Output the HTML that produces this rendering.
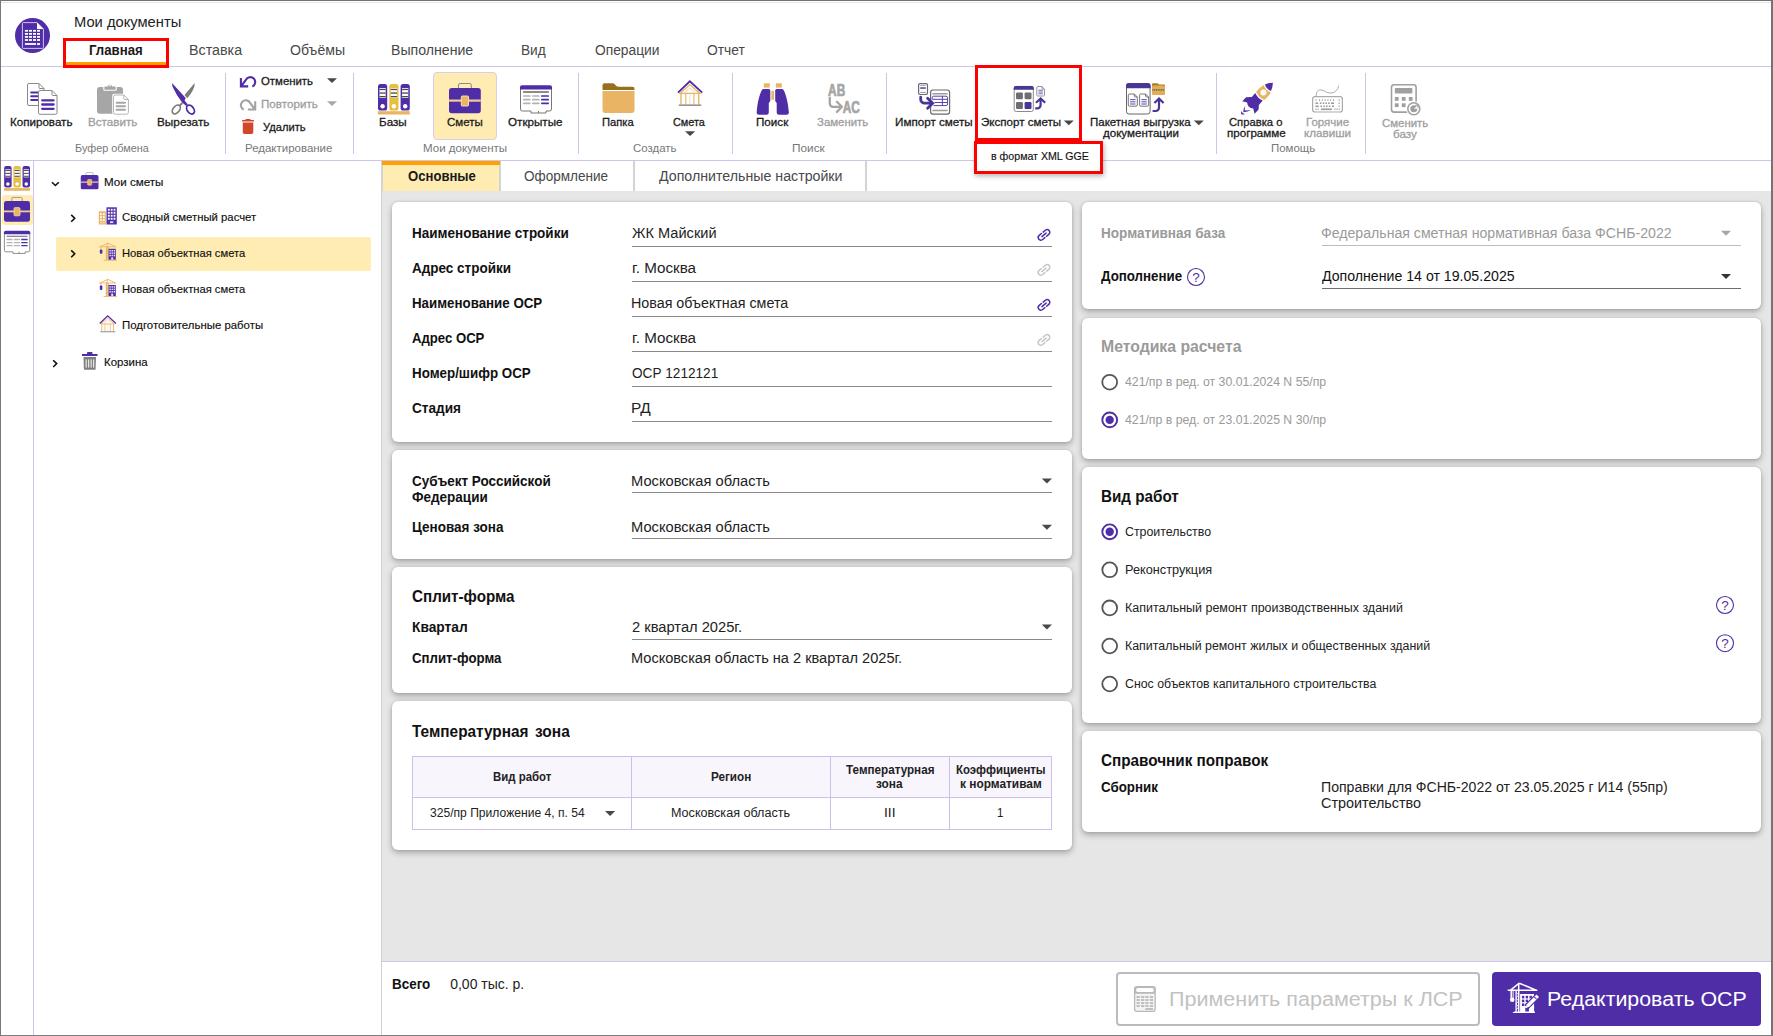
<!DOCTYPE html>
<html lang="ru"><head><meta charset="utf-8"><title>Мои документы</title>
<style>html,body{margin:0;padding:0;background:#fff}
body{width:1773px;height:1036px;position:relative;overflow:hidden;font-family:"Liberation Sans",sans-serif}
#r>div{position:absolute}
#t>span{position:absolute;white-space:nowrap;line-height:1;transform-origin:0 0}
svg{position:absolute;left:0;top:0}</style></head><body>
<div id="r">
<div style="left:382px;top:191px;width:1389px;height:770px;background:#e6e6e6"></div>
<div style="left:1px;top:66px;width:1770px;height:1px;background:#cfc4ea"></div>
<div style="left:1px;top:160px;width:1770px;height:1px;background:#cfc4ea"></div>
<div style="left:225px;top:72.5px;width:1px;height:81px;background:#cfc4ea"></div>
<div style="left:353px;top:72.5px;width:1px;height:81px;background:#cfc4ea"></div>
<div style="left:578px;top:72.5px;width:1px;height:81px;background:#cfc4ea"></div>
<div style="left:732px;top:72.5px;width:1px;height:81px;background:#cfc4ea"></div>
<div style="left:886px;top:72.5px;width:1px;height:81px;background:#cfc4ea"></div>
<div style="left:1216px;top:72.5px;width:1px;height:81px;background:#cfc4ea"></div>
<div style="left:1365px;top:72.5px;width:1px;height:81px;background:#cfc4ea"></div>
<div style="left:65px;top:62px;width:101px;height:4px;background:#ff9f00"></div>
<div style="left:432.5px;top:71.5px;width:64px;height:68px;background:#ffecb3;border:1px solid #d9cdee;border-radius:4px;box-sizing:border-box"></div>
<div style="left:33px;top:161px;width:1px;height:875px;background:#cfc4ea"></div>
<div style="left:2px;top:195px;width:31px;height:30px;background:#ffecb3;border-radius:3px"></div>
<div style="left:56px;top:237px;width:315px;height:34px;background:#ffecb3;border-radius:2px"></div>
<div style="left:381px;top:161px;width:2px;height:30px;background:#d3d3d3"></div>
<div style="left:383px;top:161px;width:116px;height:30px;background:#ffecb3"></div>
<div style="left:381.7px;top:161px;width:118.3px;height:4px;background:#ff9f00"></div>
<div style="left:499px;top:165px;width:2px;height:26px;background:#d3d3d3"></div>
<div style="left:500px;top:161px;width:1px;height:4px;background:#d3d3d3"></div>
<div style="left:633px;top:161px;width:2px;height:30px;background:#d3d3d3"></div>
<div style="left:864.5px;top:161px;width:2px;height:30px;background:#d3d3d3"></div>
<div style="left:392px;top:202px;width:680px;height:240px;background:#fff;border-radius:6px;box-shadow:0 3px 6px rgba(0,0,0,.27),0 0 3px rgba(0,0,0,.13)"></div>
<div style="left:392px;top:450px;width:680px;height:108.5px;background:#fff;border-radius:6px;box-shadow:0 3px 6px rgba(0,0,0,.27),0 0 3px rgba(0,0,0,.13)"></div>
<div style="left:392px;top:567px;width:680px;height:126px;background:#fff;border-radius:6px;box-shadow:0 3px 6px rgba(0,0,0,.27),0 0 3px rgba(0,0,0,.13)"></div>
<div style="left:392px;top:701px;width:680px;height:148.5px;background:#fff;border-radius:6px;box-shadow:0 3px 6px rgba(0,0,0,.27),0 0 3px rgba(0,0,0,.13)"></div>
<div style="left:1082px;top:202px;width:679px;height:106.5px;background:#fff;border-radius:6px;box-shadow:0 3px 6px rgba(0,0,0,.27),0 0 3px rgba(0,0,0,.13)"></div>
<div style="left:1082px;top:317.5px;width:679px;height:141px;background:#fff;border-radius:6px;box-shadow:0 3px 6px rgba(0,0,0,.27),0 0 3px rgba(0,0,0,.13)"></div>
<div style="left:1082px;top:467px;width:679px;height:255.5px;background:#fff;border-radius:6px;box-shadow:0 3px 6px rgba(0,0,0,.27),0 0 3px rgba(0,0,0,.13)"></div>
<div style="left:1082px;top:731px;width:679px;height:101px;background:#fff;border-radius:6px;box-shadow:0 3px 6px rgba(0,0,0,.27),0 0 3px rgba(0,0,0,.13)"></div>
<div style="left:632px;top:246px;width:420px;height:1px;background:#8a8a8a"></div>
<div style="left:632px;top:281px;width:420px;height:1px;background:#8a8a8a"></div>
<div style="left:632px;top:316px;width:420px;height:1px;background:#8a8a8a"></div>
<div style="left:632px;top:351px;width:420px;height:1px;background:#8a8a8a"></div>
<div style="left:632px;top:386px;width:420px;height:1px;background:#8a8a8a"></div>
<div style="left:632px;top:421px;width:420px;height:1px;background:#8a8a8a"></div>
<div style="left:632px;top:492px;width:420px;height:1px;background:#8a8a8a"></div>
<div style="left:632px;top:538px;width:420px;height:1px;background:#8a8a8a"></div>
<div style="left:632px;top:639px;width:420px;height:1px;background:#8a8a8a"></div>
<div style="left:1322px;top:245px;width:419px;height:1px;background:#bdbdbd"></div>
<div style="left:1322px;top:287.5px;width:419px;height:1px;background:#6e6e6e"></div>
<div style="left:412px;top:756px;width:640px;height:74px;border:1px solid #cdbfe9;box-sizing:border-box;background:#fff"></div>
<div style="left:413px;top:757px;width:638px;height:40px;background:#f8f5fd"></div>
<div style="left:412px;top:797px;width:640px;height:1px;background:#cdbfe9"></div>
<div style="left:631px;top:756px;width:1px;height:74px;background:#cdbfe9"></div>
<div style="left:830px;top:756px;width:1px;height:74px;background:#cdbfe9"></div>
<div style="left:949px;top:756px;width:1px;height:74px;background:#cdbfe9"></div>
<div style="left:382px;top:961px;width:1389px;height:1px;background:#cfc4ea"></div>
<div style="left:382px;top:962px;width:1389px;height:74px;background:#fff"></div>
<div style="left:1116px;top:972px;width:363.5px;height:54px;border:2px solid #bcbcbc;border-radius:4px;box-sizing:border-box;background:#fff"></div>
<div style="left:1492px;top:972px;width:269px;height:54px;background:#4f2da7;border-radius:4px"></div>
<div style="left:381px;top:191px;width:1.4px;height:845px;background:#d0d0d0"></div>
<div style="left:62.5px;top:38.3px;width:106px;height:29.8px;border:3px solid #ff0000;box-sizing:border-box"></div>
<div style="left:974.8px;top:65.3px;width:107.4px;height:75.7px;border:3px solid #ff0000;box-sizing:border-box"></div>
<div style="left:973.7px;top:141px;width:129.7px;height:33.1px;border:3px solid #ff0000;box-sizing:border-box;background:#fff;box-shadow:1px 2px 5px rgba(0,0,0,.3)"></div>
<div style="left:0px;top:0px;width:1773px;height:1px;background:#727272"></div>
<div style="left:1px;top:2px;width:1770px;height:1px;background:#e4e6e4"></div>
<div style="left:0px;top:0px;width:1px;height:1036px;background:#787878"></div>
<div style="left:1771.3px;top:0px;width:1.7px;height:1036px;background:#747474"></div>
<div style="left:0px;top:1035px;width:1773px;height:1px;background:#7c7c7c"></div>
</div>
<svg width="1773" height="1036" viewBox="0 0 1773 1036">
<circle cx="32.5" cy="35.5" r="17.5" fill="#4f2da7"/><path d="M23.2,22.6 H37 L43.4,29 V47.6 a.8,.8 0 0 1 -.8,.8 H23.2 a.8,.8 0 0 1 -.8,-.8 V23.4 a.8,.8 0 0 1 .8,-.8Z" fill="none" stroke="#cfc4ee" stroke-width="1"/><path d="M37,22.6 L43.4,29 H37Z" fill="#fff"/><rect x="24.9" y="29.9" width="3.2" height="1.8" fill="#fff"/><rect x="24.9" y="33" width="3.2" height="1.8" fill="#fff"/><rect x="24.9" y="36" width="3.2" height="1.8" fill="#fff"/><rect x="24.9" y="39.1" width="3.2" height="1.8" fill="#fff"/><rect x="29" y="29.9" width="3.0" height="1.8" fill="#fff"/><rect x="29" y="33" width="3.0" height="1.8" fill="#fff"/><rect x="29" y="36" width="3.0" height="1.8" fill="#fff"/><rect x="29" y="39.1" width="3.0" height="1.8" fill="#fff"/><rect x="33" y="29.9" width="3.0" height="1.8" fill="#fff"/><rect x="33" y="33" width="3.0" height="1.8" fill="#fff"/><rect x="33" y="36" width="3.0" height="1.8" fill="#fff"/><rect x="33" y="39.1" width="3.0" height="1.8" fill="#fff"/><rect x="37" y="29.9" width="3.0" height="1.8" fill="#fff"/><rect x="37" y="33" width="3.0" height="1.8" fill="#fff"/><rect x="37" y="36" width="3.0" height="1.8" fill="#fff"/><rect x="37" y="39.1" width="3.0" height="1.8" fill="#fff"/><rect x="24.9" y="43.1" width="11.1" height="1.8" fill="#fff"/><rect x="37" y="43.1" width="3" height="1.8" fill="#fff"/>
<path d="M29.0,83.5 H39 L44,88.5 V104.0 a1.5,1.5 0 0 1 -1.5,1.5 H29.0 a1.5,1.5 0 0 1 -1.5,-1.5 V85.0 a1.5,1.5 0 0 1 1.5,-1.5Z" fill="#fff" stroke="#8a8a8a" stroke-width="1"/><path d="M39,83.5 V87.7 a.8,.8 0 0 0 .8,.8 H44" fill="none" stroke="#8a8a8a" stroke-width="1"/><path d="M31.2,92.6H40" stroke="#4f2da7" stroke-width="2" stroke-linecap="round"/><path d="M31.2,96.3H40" stroke="#4f2da7" stroke-width="2" stroke-linecap="round"/><path d="M31.2,100H40" stroke="#4f2da7" stroke-width="2" stroke-linecap="round"/><path d="M40.0,90.5 H52 L57,95.5 V112.8 a1.5,1.5 0 0 1 -1.5,1.5 H40.0 a1.5,1.5 0 0 1 -1.5,-1.5 V92.0 a1.5,1.5 0 0 1 1.5,-1.5Z" fill="#fff" stroke="#8a8a8a" stroke-width="1"/><path d="M52,90.5 V94.7 a.8,.8 0 0 0 .8,.8 H57" fill="none" stroke="#8a8a8a" stroke-width="1"/><path d="M42.2,100.3H53.6" stroke="#4f2da7" stroke-width="2.3" stroke-linecap="round"/><path d="M42.2,104.5H53.6" stroke="#4f2da7" stroke-width="2.3" stroke-linecap="round"/><path d="M42.2,108.8H53.6" stroke="#4f2da7" stroke-width="2.3" stroke-linecap="round"/>
<rect x="97" y="87" width="26" height="26.8" rx="2.8" fill="#a6a6a6"/><path d="M103.8,89.3 V87.2 a1.2,1.2 0 0 1 1.2,-1.2 H107.3 a2.8,2.8 0 0 1 5.4,0 H115 a1.2,1.2 0 0 1 1.2,1.2 V89.3 a1,1 0 0 1 -1,1 H104.8 a1,1 0 0 1 -1,-1Z" fill="#a6a6a6" stroke="#fff" stroke-width="1.1"/><rect x="112.2" y="93.8" width="12" height="21" rx="2" fill="#fff"/><circle cx="110" cy="85.6" r=".9" fill="#fff"/><path d="M115.3,95 H123.9 L128.4,99.5 V112.4 a1.8,1.8 0 0 1 -1.8,1.8 H115.3 a1.8,1.8 0 0 1 -1.8,-1.8 V96.8 a1.8,1.8 0 0 1 1.8,-1.8Z" fill="#fff" stroke="#b4b4b4" stroke-width="1"/><path d="M123.9,95 V98.7 a.8,.8 0 0 0 .8,.8 H128.4" fill="none" stroke="#b4b4b4" stroke-width="1"/><path d="M116.6,102.8H125" stroke="#a6a6a6" stroke-width="1.9" stroke-linecap="round"/><path d="M116.6,106.3H125" stroke="#a6a6a6" stroke-width="1.9" stroke-linecap="round"/><path d="M116.6,109.8H125" stroke="#a6a6a6" stroke-width="1.9" stroke-linecap="round"/>
<path d="M194.7,83.1 Q194.8,88.2 190.6,93.9 L187.3,98.3 L184.5,94.9 Z" fill="#7a7a7a"/><path d="M182.3,103 L179.9,105.4" stroke="#7a7a7a" stroke-width="2"/><ellipse cx="176.3" cy="109.5" rx="5" ry="3.2" transform="rotate(-50 176.3 109.5)" fill="none" stroke="#7a7a7a" stroke-width="1.7"/><path d="M172,82.9 L185.7,98 L184.6,100.6 L187.8,104.6 L186.3,106 L182.2,102.4 Q176.4,95.6 172.5,86.6 Z" fill="#4f2da7"/><ellipse cx="190.5" cy="109.6" rx="4.9" ry="3.3" transform="rotate(54 190.5 109.6)" fill="none" stroke="#4f2da7" stroke-width="1.8"/>
<path d="M240.9,78.1 V86.4 H248.2 M241.4,85.9 L245.86,79.93 A4.9,4.9 0 1 1 252.37,86.44" fill="none" stroke="#4f2da7" stroke-width="2.1" stroke-linejoin="miter"/><path d="M255.2,101.3 V109.5 H247.9 M254.7,109 L250.24,103.13 A4.9,4.9 0 1 0 243.73,109.64" fill="none" stroke="#a3a3a3" stroke-width="2.1" stroke-linejoin="miter"/><path d="M327,78.19999999999999 H337 L332.0,83.0Z" fill="#484848"/><path d="M327,101.3 H337 L332.0,106.10000000000001Z" fill="#a8a8a8"/><rect x="242" y="120" width="12" height="1.6" rx=".5" fill="#d0482c"/><rect x="245.4" y="119" width="5.2" height="1.6" rx=".7" fill="#d0482c"/><path d="M242.8,122.5 H253.3 V132.2 a1.7,1.7 0 0 1 -1.7,1.7 H244.5 a1.7,1.7 0 0 1 -1.7,-1.7Z" fill="#d0482c"/>
<rect x="378" y="84" width="9.2" height="26.6" rx="2.6" fill="#4f2da7"/><rect x="379.5" y="88" width="6.2" height="10" fill="#fff"/><rect x="379.5" y="88.80000000000001" width="6.2" height="1.3" fill="#4a4a4a"/><rect x="379.5" y="92.4" width="6.2" height="1.3" fill="#4a4a4a"/><rect x="379.5" y="96.0" width="6.2" height="1.3" fill="#4a4a4a"/><circle cx="382.6" cy="106.2" r="2.2" fill="#fff"/><rect x="389.3" y="84" width="9.2" height="26.6" rx="2.6" fill="#e8be3e"/><rect x="390.8" y="88" width="6.2" height="10" fill="#fff"/><rect x="390.8" y="88.80000000000001" width="6.2" height="1.3" fill="#4a4a4a"/><rect x="390.8" y="92.4" width="6.2" height="1.3" fill="#4a4a4a"/><rect x="390.8" y="96.0" width="6.2" height="1.3" fill="#4a4a4a"/><circle cx="393.90000000000003" cy="106.2" r="2.2" fill="#fff"/><rect x="400.6" y="84" width="9.2" height="26.6" rx="2.6" fill="#4f2da7"/><rect x="402.1" y="88" width="6.2" height="10" fill="#fff"/><rect x="402.1" y="88.80000000000001" width="6.2" height="1.3" fill="#4a4a4a"/><rect x="402.1" y="92.4" width="6.2" height="1.3" fill="#4a4a4a"/><rect x="402.1" y="96.0" width="6.2" height="1.3" fill="#4a4a4a"/><circle cx="405.20000000000005" cy="106.2" r="2.2" fill="#fff"/><rect x="377.8" y="111.2" width="32" height="3.3" fill="#e9b565"/>
<path d="M458.5,88.5 V85 a1.5,1.5 0 0 1 1.5,-1.5 H469.8 a1.5,1.5 0 0 1 1.5,1.5 V88.5" fill="none" stroke="#8a8a8a" stroke-width="1"/><rect x="449" y="88" width="31.8" height="25.3" rx="2.8" fill="#4f2da7"/><rect x="449" y="99.5" width="31.8" height="2.2" fill="#f0cd92"/><rect x="461.3" y="96" width="7.2" height="10" rx="1" fill="#e9b565" stroke="#f7dfb3" stroke-width="1"/>
<path d="M520.5,87 V109 a2,2 0 0 0 2,2 H531 V113 H546 V111 H549.5 a2,2 0 0 0 2,-2 V87Z" fill="#fff" stroke="#777" stroke-width="1"/><path d="M538.5,111 V113" stroke="#777" stroke-width="1"/><path d="M520,89.6 V87.3 a2,2 0 0 1 2,-2 H550 a2,2 0 0 1 2,2 V89.6Z" fill="#4f2da7"/><rect x="523" y="91.3" width="26" height="1.4" rx=".6" fill="#666"/><rect x="523" y="95.15" width="7.6" height="1.7" rx=".7" fill="#b3b3b3"/><rect x="532" y="95.15" width="7.6" height="1.7" rx=".7" fill="#b3b3b3"/><rect x="541" y="95.15" width="8" height="1.7" rx=".7" fill="#4f2da7"/><rect x="523" y="98.85000000000001" width="7.6" height="1.7" rx=".7" fill="#b3b3b3"/><rect x="532" y="98.85000000000001" width="7.6" height="1.7" rx=".7" fill="#b3b3b3"/><rect x="541" y="98.85000000000001" width="8" height="1.7" rx=".7" fill="#4f2da7"/><rect x="523" y="102.55000000000001" width="7.6" height="1.7" rx=".7" fill="#b3b3b3"/><rect x="532" y="102.55000000000001" width="7.6" height="1.7" rx=".7" fill="#b3b3b3"/><rect x="541" y="102.55000000000001" width="8" height="1.7" rx=".7" fill="#4f2da7"/>
<path d="M602.5,90 V85.3 a2,2 0 0 1 2,-2 H612.6 c2.6,0 3,3.5 6,3.5 H632.5 a2,2 0 0 1 2,2 V90Z" fill="#96701f"/><path d="M602.5,91 H634.5 V110.6 a2.4,2.4 0 0 1 -2.4,2.4 H604.9 a2.4,2.4 0 0 1 -2.4,-2.4Z" fill="#e9b565"/>
<path d="M681,93 V104.4" stroke="#e9b565" stroke-width="1.4"/><path d="M685.8,93 V104.4" stroke="#e9b565" stroke-width="1.1"/><path d="M689.9,93 V104.4" stroke="#f3d9ae" stroke-width="0.8"/><path d="M693.9,93 V104.4" stroke="#e9b565" stroke-width="1.1"/><path d="M698.7,93 V104.4" stroke="#e9b565" stroke-width="1.4"/><path d="M680,93.4 L689.85,84.6 L699.8,93.4 Z" fill="none" stroke="#e9b565" stroke-width="1.3" stroke-linejoin="miter"/><path d="M684.2,93 L689.85,87.8 L695.5,93" fill="none" stroke="#f1d3a2" stroke-width="1"/><path d="M678,92.6 L689.85,81.2 L702.2,92.6" fill="none" stroke="#4f2da7" stroke-width="1.9"/><rect x="678.8" y="104.5" width="22.5" height="1.3" fill="#7d7d7d"/><path d="M685,131.2 H695.2 L690.1,136.0Z" fill="#484848"/>
<rect x="763.8" y="83.3" width="6" height="4.3" fill="#e9b565"/><rect x="775.8" y="83.3" width="6" height="4.3" fill="#e9b565"/><rect x="771.3" y="90.8" width="2.8" height="9" fill="#e9b565"/><path d="M763.6,88.9 H768.8 a1.5,1.5 0 0 1 1.5,1.5 V101 L768.8,103 V112.4 a2.3,2.3 0 0 1 -2.3,2.3 H759 a2.3,2.3 0 0 1 -2.3,-2.6 C757.4,103 759.4,94.5 761.8,90.2 Q762.5,88.9 763.6,88.9Z" fill="#4f2da7"/><path d="M781.9,88.9 H776.7 a1.5,1.5 0 0 0 -1.5,1.5 V101 L776.7,103 V112.4 a2.3,2.3 0 0 0 2.3,2.3 H786.5 a2.3,2.3 0 0 0 2.3,-2.6 C788.1,103 786.1,94.5 783.7,90.2 Q783,88.9 781.9,88.9Z" fill="#4f2da7"/>
<text x="828.1" y="95.9" font-family="Liberation Sans" font-weight="700" font-size="16.5" fill="#a5a5a5" stroke="#a5a5a5" stroke-width=".7" textLength="17.1" lengthAdjust="spacingAndGlyphs">AB</text><text x="842.8" y="112.7" font-family="Liberation Sans" font-weight="700" font-size="17" fill="#a5a5a5" stroke="#a5a5a5" stroke-width=".7" textLength="17.1" lengthAdjust="spacingAndGlyphs">AC</text><path d="M829.8,97.8 V103.6 a3.2,3.2 0 0 0 3.2,3.2 H841.4 M836.9,101.8 L841.9,106.8 L836.9,111.9" fill="none" stroke="#a5a5a5" stroke-width="2.3" stroke-linecap="round" stroke-linejoin="round"/>
<rect x="918.6" y="83.6" width="8.9" height="10.9" rx="1.4" fill="#fff" stroke="#6a6a6a" stroke-width="1.2"/><rect x="920.2" y="85" width="5.6" height="1" fill="#a8a8a8"/><rect x="920.2" y="87.2" width="5.6" height="1.7" fill="#6b55b5"/><rect x="920.2" y="92" width="5.6" height="1" fill="#a0a0a0"/><rect x="930.6" y="90" width="19" height="24.2" rx="2.4" fill="#fff" stroke="#6a6a6a" stroke-width="1.2"/><rect x="932.2" y="92.9" width="15.6" height="1.5" rx=".7" fill="#9d9d9d"/><rect x="932.2" y="109.7" width="15.6" height="1.5" rx=".7" fill="#9d9d9d"/><path d="M933.6,96.2 H946 a1.6,1.6 0 0 1 1.6,1.6 V104 a1.6,1.6 0 0 1 -1.6,1.6 H933.6 M933.6,96.2 a1.4,1.4 0 0 0 -1.4,1.4 V99.3 H947.6 M934.6,102.5 H947.6 M942.4,96.2 V105.6" fill="none" stroke="#5a42ae" stroke-width="1"/><path d="M920.7,97.2 V99.4 a3.8,3.8 0 0 0 3.8,3.8 H931.6 M927.6,98.3 L932.7,103.2 L927.6,108.2" fill="none" stroke="#4b3695" stroke-width="2.8" stroke-linecap="round" stroke-linejoin="miter"/>
<rect x="1014.2" y="86.4" width="19.1" height="25.1" rx="2" fill="#fff" stroke="#8a8a8a"/><path d="M1013.7,89.8 V88 a2,2 0 0 1 2,-2 H1031.8 a2,2 0 0 1 2,2 V89.8Z" fill="#4b3695"/><rect x="1016" y="92.4" width="6.9" height="6.9" rx="1.2" fill="#6e6b72"/><rect x="1024.6" y="92.4" width="6.9" height="6.9" rx="1.2" fill="#6e6b72"/><rect x="1016" y="102.1" width="6.9" height="6.9" rx="1.2" fill="#6e6b72"/><rect x="1024.6" y="102.1" width="6.9" height="6.9" rx="1.2" fill="#4b3695"/><path d="M1037.8,86.5 H1041.9 L1044.5,89.1 V95 a1,1 0 0 1 -1,1 H1037.8 a1,1 0 0 1 -1,-1 V87.5 a1,1 0 0 1 1,-1Z" fill="#fff" stroke="#8a8a8a" stroke-width="0.9"/><path d="M1041.9,86.5 V88.3 a.8,.8 0 0 0 .8,.8 H1044.5" fill="none" stroke="#8a8a8a" stroke-width="0.9"/><rect x="1038.4" y="89.75" width="4.5" height=".9" fill="#6a55b8"/><rect x="1038.4" y="91.55" width="4.5" height=".9" fill="#6a55b8"/><rect x="1038.4" y="93.35" width="4.5" height=".9" fill="#6a55b8"/><path d="M1035.2,108.3 H1037.3999999999999 a3.2,3.2 0 0 0 3.2,-3.2 V99.5 M1036.0,102.8 L1040.6,98.4 L1045.1999999999998,102.8" fill="none" stroke="#4b3695" stroke-width="2.2"/><path d="M1063.8,120.39999999999999 H1073.8 L1068.8,125.2Z" fill="#484848"/>
<rect x="1126.5" y="83.6" width="23.6" height="30.4" rx="2.6" fill="#fff" stroke="#666"/><path d="M1126,88.3 V85.6 a2.6,2.6 0 0 1 2.6,-2.6 H1148 a2.6,2.6 0 0 1 2.6,2.6 V88.3Z" fill="#4b3695"/><path d="M1129.5,94 H1134.3 L1137.3,97 V105.0 a1.2,1.2 0 0 1 -1.2,1.2 H1129.5 a1.2,1.2 0 0 1 -1.2,-1.2 V95.2 a1.2,1.2 0 0 1 1.2,-1.2Z" fill="#fff" stroke="#666" stroke-width="0.9"/><path d="M1134.3,94 V96.2 a.8,.8 0 0 0 .8,.8 H1137.3" fill="none" stroke="#666" stroke-width="0.9"/><rect x="1130.1" y="99.05" width="5.4" height="1.1" fill="#6a55b8"/><rect x="1130.1" y="101.25" width="5.4" height="1.1" fill="#6a55b8"/><rect x="1130.1" y="103.45" width="5.4" height="1.1" fill="#6a55b8"/><path d="M1140.8,94 H1145.6 L1148.6,97 V105.0 a1.2,1.2 0 0 1 -1.2,1.2 H1140.8 a1.2,1.2 0 0 1 -1.2,-1.2 V95.2 a1.2,1.2 0 0 1 1.2,-1.2Z" fill="#fff" stroke="#666" stroke-width="0.9"/><path d="M1145.6,94 V96.2 a.8,.8 0 0 0 .8,.8 H1148.6" fill="none" stroke="#666" stroke-width="0.9"/><rect x="1141.3999999999999" y="99.05" width="5.4" height="1.1" fill="#6a55b8"/><rect x="1141.3999999999999" y="101.25" width="5.4" height="1.1" fill="#6a55b8"/><rect x="1141.3999999999999" y="103.45" width="5.4" height="1.1" fill="#6a55b8"/><path d="M1152,86 V84.2 a1,1 0 0 1 1,-1 H1157.5 l1.5,1.4 H1164 a1,1 0 0 1 1,1 V86Z" fill="#a87d27"/><rect x="1152" y="85.6" width="13" height="9.4" rx=".8" fill="#e3ad55"/><path d="M1152.6,89.9 H1164.6" stroke="#666" stroke-width="1.6" stroke-dasharray="1 .7"/><path d="M1152.6,111 H1155.8 a3.2,3.2 0 0 0 3.2,-3.2 V99.7 M1154.4,103.0 L1159,98.60000000000001 L1163.6,103.0" fill="none" stroke="#4b3695" stroke-width="2.2"/><path d="M1193.8,120.39999999999999 H1203.8 L1198.8,125.2Z" fill="#484848"/>
<path d="M1272.9,82.8 Q1268.5,82.9 1264.9,84.5 Q1266.6,89.4 1271,91.1 Q1272.7,87.5 1272.9,82.8Z" fill="#4f2da7"/><path d="M1263.7,85 Q1265.5,90.4 1270.9,92.4 Q1268.5,96.5 1264.4,100 Q1258.5,97.5 1256.1,91.7 Q1259.5,87.5 1263.7,85Z" fill="#e9b565"/><circle cx="1263.4" cy="92.6" r="3" fill="#fff"/><path d="M1255.2,93 Q1257.6,98.3 1262.7,100.5 L1258.9,104.9 L1258.6,109.6 L1254.6,113.8 L1253.2,108.6 Q1250.3,108.6 1248.6,106.6 Q1247.3,104.8 1247.1,102.6 L1242.3,101.2 L1246.1,97.3 L1251.9,97 Z" fill="#4f2da7"/><path d="M1245.5,105.2 Q1243.2,108.5 1243.3,112.2 Q1247.6,112.3 1250.9,110.1 Q1247,110.6 1244.8,110.3 Q1244.6,107.8 1245.5,105.2Z M1241.1,111 Q1240.7,113.2 1241.5,114.5 Q1243.4,114.8 1244.9,114.2 Q1242.6,113.8 1241.1,111Z" fill="#4f2da7"/>
<rect x="1312.6" y="96.6" width="29.8" height="15.4" rx="2.6" fill="#fff" stroke="#ababab" stroke-width="1.2"/><path d="M1316.2,96.4 C1316,90.5 1319.6,88.2 1324.6,91.2 S1336.6,94.2 1338.8,85.6" fill="none" stroke="#ababab" stroke-width="1"/><rect x="1315.5" y="99.3" width="1" height="1.6" fill="#9c9c9c"/><rect x="1319" y="99.3" width="1" height="1.6" fill="#9c9c9c"/><rect x="1321.8" y="99.3" width="1" height="1.6" fill="#9c9c9c"/><rect x="1324.6" y="99.3" width="1" height="1.6" fill="#9c9c9c"/><rect x="1327.4" y="99.3" width="1" height="1.6" fill="#9c9c9c"/><rect x="1330.2" y="99.3" width="1" height="1.6" fill="#9c9c9c"/><rect x="1333" y="99.3" width="1" height="1.6" fill="#9c9c9c"/><rect x="1338.6" y="99.3" width="1" height="1.6" fill="#9c9c9c"/><rect x="1315.5" y="102.39999999999999" width="2.6" height="1.6" fill="#9c9c9c"/><rect x="1319.8" y="102.39999999999999" width="1.6" height="1.6" fill="#9c9c9c"/><rect x="1322.6" y="102.39999999999999" width="1.6" height="1.6" fill="#9c9c9c"/><rect x="1325.4" y="102.39999999999999" width="1.6" height="1.6" fill="#9c9c9c"/><rect x="1328.2" y="102.39999999999999" width="1.6" height="1.6" fill="#9c9c9c"/><rect x="1331" y="102.39999999999999" width="3" height="1.6" fill="#9c9c9c"/><rect x="1338.6" y="102.39999999999999" width="1" height="1.6" fill="#9c9c9c"/><rect x="1315.5" y="105.5" width="3.2" height="1.6" fill="#9c9c9c"/><rect x="1320.4" y="105.5" width="1.6" height="1.6" fill="#9c9c9c"/><rect x="1323.2" y="105.5" width="1.6" height="1.6" fill="#9c9c9c"/><rect x="1326" y="105.5" width="1.6" height="1.6" fill="#9c9c9c"/><rect x="1328.8" y="105.5" width="1.6" height="1.6" fill="#9c9c9c"/><rect x="1332" y="105.5" width="2" height="1.6" fill="#9c9c9c"/><rect x="1338.6" y="105.5" width="1" height="1.6" fill="#9c9c9c"/><rect x="1315.5" y="108.5" width="1" height="1.6" fill="#9c9c9c"/><rect x="1317.6" y="108.5" width="1" height="1.6" fill="#9c9c9c"/><rect x="1321" y="108.5" width="11" height="1.6" fill="#9c9c9c"/><rect x="1334.4" y="108.5" width="1" height="1.6" fill="#9c9c9c"/><rect x="1336.5" y="108.5" width="1" height="1.6" fill="#9c9c9c"/><rect x="1338.6" y="108.5" width="1" height="1.6" fill="#9c9c9c"/>
<rect x="1391.5" y="84.8" width="24.6" height="27.3" rx="2.6" fill="#fff" stroke="#a0a0a0" stroke-width="1.6"/><rect x="1394.8" y="88" width="17.6" height="5.6" rx=".8" fill="#a0a0a0"/><rect x="1394.8" y="97" width="3.8" height="3.8" fill="#a0a0a0"/><rect x="1401.8" y="97" width="3.8" height="3.8" fill="#a0a0a0"/><rect x="1408.8" y="97" width="3.8" height="3.8" fill="#a0a0a0"/><rect x="1394.8" y="103.3" width="3.8" height="3.8" fill="#a0a0a0"/><rect x="1401.8" y="103.3" width="3.8" height="3.8" fill="#a0a0a0"/><rect x="1408.8" y="103.3" width="3.8" height="3.8" fill="#a0a0a0"/><circle cx="1413.8" cy="108.8" r="7.6" fill="#fff"/><circle cx="1413.8" cy="108.8" r="6" fill="#fff" stroke="#a0a0a0" stroke-width="1.6"/><circle cx="1413.8" cy="108.8" r="3.5" fill="#a0a0a0"/><path d="M1413.8,108.8 L1418.4,105 L1418.4,108.8Z" fill="#fff"/><path d="M1415.2,105.2 H1418 V108" fill="none" stroke="#a0a0a0" stroke-width="1.1"/>
<g transform="translate(-302.96,97.75) scale(0.8125)"><rect x="378" y="84" width="9.2" height="26.6" rx="2.6" fill="#4f2da7"/><rect x="379.5" y="88" width="6.2" height="10" fill="#fff"/><rect x="379.5" y="88.80000000000001" width="6.2" height="1.3" fill="#4a4a4a"/><rect x="379.5" y="92.4" width="6.2" height="1.3" fill="#4a4a4a"/><rect x="379.5" y="96.0" width="6.2" height="1.3" fill="#4a4a4a"/><circle cx="382.6" cy="106.2" r="2.2" fill="#fff"/><rect x="389.3" y="84" width="9.2" height="26.6" rx="2.6" fill="#e8be3e"/><rect x="390.8" y="88" width="6.2" height="10" fill="#fff"/><rect x="390.8" y="88.80000000000001" width="6.2" height="1.3" fill="#4a4a4a"/><rect x="390.8" y="92.4" width="6.2" height="1.3" fill="#4a4a4a"/><rect x="390.8" y="96.0" width="6.2" height="1.3" fill="#4a4a4a"/><circle cx="393.90000000000003" cy="106.2" r="2.2" fill="#fff"/><rect x="400.6" y="84" width="9.2" height="26.6" rx="2.6" fill="#4f2da7"/><rect x="402.1" y="88" width="6.2" height="10" fill="#fff"/><rect x="402.1" y="88.80000000000001" width="6.2" height="1.3" fill="#4a4a4a"/><rect x="402.1" y="92.4" width="6.2" height="1.3" fill="#4a4a4a"/><rect x="402.1" y="96.0" width="6.2" height="1.3" fill="#4a4a4a"/><circle cx="405.20000000000005" cy="106.2" r="2.2" fill="#fff"/><rect x="377.8" y="111.2" width="32" height="3.3" fill="#e9b565"/></g><g transform="translate(-363.11,129.14) scale(0.8176)"><path d="M458.5,88.5 V85 a1.5,1.5 0 0 1 1.5,-1.5 H469.8 a1.5,1.5 0 0 1 1.5,1.5 V88.5" fill="none" stroke="#8a8a8a" stroke-width="1"/><rect x="449" y="88" width="31.8" height="25.3" rx="2.8" fill="#4f2da7"/><rect x="449" y="99.5" width="31.8" height="2.2" fill="#f0cd92"/><rect x="461.3" y="96" width="7.2" height="10" rx="1" fill="#e9b565" stroke="#f7dfb3" stroke-width="1"/></g><g transform="translate(-421.16,161.06) scale(0.8176)"><path d="M520.5,87 V109 a2,2 0 0 0 2,2 H531 V113 H546 V111 H549.5 a2,2 0 0 0 2,-2 V87Z" fill="#fff" stroke="#777" stroke-width="1"/><path d="M538.5,111 V113" stroke="#777" stroke-width="1"/><path d="M520,89.6 V87.3 a2,2 0 0 1 2,-2 H550 a2,2 0 0 1 2,2 V89.6Z" fill="#4f2da7"/><rect x="523" y="91.3" width="26" height="1.4" rx=".6" fill="#666"/><rect x="523" y="95.15" width="7.6" height="1.7" rx=".7" fill="#b3b3b3"/><rect x="532" y="95.15" width="7.6" height="1.7" rx=".7" fill="#b3b3b3"/><rect x="541" y="95.15" width="8" height="1.7" rx=".7" fill="#4f2da7"/><rect x="523" y="98.85000000000001" width="7.6" height="1.7" rx=".7" fill="#b3b3b3"/><rect x="532" y="98.85000000000001" width="7.6" height="1.7" rx=".7" fill="#b3b3b3"/><rect x="541" y="98.85000000000001" width="8" height="1.7" rx=".7" fill="#4f2da7"/><rect x="523" y="102.55000000000001" width="7.6" height="1.7" rx=".7" fill="#b3b3b3"/><rect x="532" y="102.55000000000001" width="7.6" height="1.7" rx=".7" fill="#b3b3b3"/><rect x="541" y="102.55000000000001" width="8" height="1.7" rx=".7" fill="#4f2da7"/></g>
<g transform="translate(-169.87,125.97) scale(0.5582)"><path d="M458.5,88.5 V85 a1.5,1.5 0 0 1 1.5,-1.5 H469.8 a1.5,1.5 0 0 1 1.5,1.5 V88.5" fill="none" stroke="#8a8a8a" stroke-width="1"/><rect x="449" y="88" width="31.8" height="25.3" rx="2.8" fill="#4f2da7"/><rect x="449" y="99.5" width="31.8" height="2.2" fill="#f0cd92"/><rect x="461.3" y="96" width="7.2" height="10" rx="1" fill="#e9b565" stroke="#f7dfb3" stroke-width="1"/></g>
<rect x="98.8" y="211.3" width="7" height="13.2" fill="#e9b565"/><rect x="100" y="213.2" width="1.8" height="1.9" fill="#fff"/><rect x="100" y="216.2" width="1.8" height="1.9" fill="#fff"/><rect x="100" y="219.2" width="1.8" height="1.9" fill="#fff"/><rect x="102.9" y="213.2" width="1.8" height="1.9" fill="#fff"/><rect x="102.9" y="216.2" width="1.8" height="1.9" fill="#fff"/><rect x="102.9" y="219.2" width="1.8" height="1.9" fill="#fff"/><rect x="100" y="222.3" width="4.7" height="1" fill="#f6e3c3"/><rect x="106.5" y="207.3" width="10.3" height="17.2" fill="#4f2da7"/><rect x="107.9" y="208.8" width="1.8" height="1.9" fill="#fff"/><rect x="107.9" y="211.8" width="1.8" height="1.9" fill="#fff"/><rect x="107.9" y="214.8" width="1.8" height="1.9" fill="#fff"/><rect x="107.9" y="217.8" width="1.8" height="1.9" fill="#fff"/><rect x="110.75" y="208.8" width="1.8" height="1.9" fill="#fff"/><rect x="110.75" y="211.8" width="1.8" height="1.9" fill="#fff"/><rect x="110.75" y="214.8" width="1.8" height="1.9" fill="#fff"/><rect x="110.75" y="217.8" width="1.8" height="1.9" fill="#fff"/><rect x="113.6" y="208.8" width="1.8" height="1.9" fill="#fff"/><rect x="113.6" y="211.8" width="1.8" height="1.9" fill="#fff"/><rect x="113.6" y="214.8" width="1.8" height="1.9" fill="#fff"/><rect x="113.6" y="217.8" width="1.8" height="1.9" fill="#fff"/><rect x="110" y="221.2" width="3.3" height="1.9" fill="#d9d2f0"/>
<g transform="translate(99,242.8)"><path d="M0,4 H17.2 M8.2,0 V17 M9.6,4 V17 M8.9,.4 L1,4 M8.9,.4 L16.5,4 M8.2,6 L9.6,8 L8.2,10 L9.6,12 L8.2,14 L9.6,16" fill="none" stroke="#e9b565" stroke-width=".9"/><path d="M7.4,4 V17 " stroke="#e9b565" stroke-width="1.2"/><path d="M2,4 V7" stroke="#e9b565" stroke-width=".8"/><rect x=".8" y="6.6" width="2.6" height="4.4" rx="1" fill="#4f2da7"/><rect x="9.6" y="6" width="7.2" height="11" fill="#4f2da7"/><rect x="10.5" y="7.2" width="1.2" height="1.5" fill="#fff"/><rect x="10.5" y="9.6" width="1.2" height="1.5" fill="#fff"/><rect x="10.5" y="12" width="1.2" height="1.5" fill="#fff"/><rect x="12.6" y="7.2" width="1.2" height="1.5" fill="#fff"/><rect x="12.6" y="9.6" width="1.2" height="1.5" fill="#fff"/><rect x="12.6" y="12" width="1.2" height="1.5" fill="#fff"/><rect x="14.7" y="7.2" width="1.2" height="1.5" fill="#fff"/><rect x="14.7" y="9.6" width="1.2" height="1.5" fill="#fff"/><rect x="14.7" y="12" width="1.2" height="1.5" fill="#fff"/><rect x="12.2" y="14.6" width="2" height="2.4" fill="#e4def5"/><rect x="4.6" y="17" width="13.2" height=".9" fill="#e9b565"/></g>
<g transform="translate(99,279)"><path d="M0,4 H17.2 M8.2,0 V17 M9.6,4 V17 M8.9,.4 L1,4 M8.9,.4 L16.5,4 M8.2,6 L9.6,8 L8.2,10 L9.6,12 L8.2,14 L9.6,16" fill="none" stroke="#e9b565" stroke-width=".9"/><path d="M7.4,4 V17 " stroke="#e9b565" stroke-width="1.2"/><path d="M2,4 V7" stroke="#e9b565" stroke-width=".8"/><rect x=".8" y="6.6" width="2.6" height="4.4" rx="1" fill="#4f2da7"/><rect x="9.6" y="6" width="7.2" height="11" fill="#4f2da7"/><rect x="10.5" y="7.2" width="1.2" height="1.5" fill="#fff"/><rect x="10.5" y="9.6" width="1.2" height="1.5" fill="#fff"/><rect x="10.5" y="12" width="1.2" height="1.5" fill="#fff"/><rect x="12.6" y="7.2" width="1.2" height="1.5" fill="#fff"/><rect x="12.6" y="9.6" width="1.2" height="1.5" fill="#fff"/><rect x="12.6" y="12" width="1.2" height="1.5" fill="#fff"/><rect x="14.7" y="7.2" width="1.2" height="1.5" fill="#fff"/><rect x="14.7" y="9.6" width="1.2" height="1.5" fill="#fff"/><rect x="14.7" y="12" width="1.2" height="1.5" fill="#fff"/><rect x="12.2" y="14.6" width="2" height="2.4" fill="#e4def5"/><rect x="4.6" y="17" width="13.2" height=".9" fill="#e9b565"/></g>
<g transform="translate(-353.56,261.51) scale(0.6686)"><path d="M681,93 V104.4" stroke="#e9b565" stroke-width="1.4"/><path d="M685.8,93 V104.4" stroke="#e9b565" stroke-width="1.1"/><path d="M689.9,93 V104.4" stroke="#f3d9ae" stroke-width="0.8"/><path d="M693.9,93 V104.4" stroke="#e9b565" stroke-width="1.1"/><path d="M698.7,93 V104.4" stroke="#e9b565" stroke-width="1.4"/><path d="M680,93.4 L689.85,84.6 L699.8,93.4 Z" fill="none" stroke="#e9b565" stroke-width="1.3" stroke-linejoin="miter"/><path d="M684.2,93 L689.85,87.8 L695.5,93" fill="none" stroke="#f1d3a2" stroke-width="1"/><path d="M678,92.6 L689.85,81.2 L702.2,92.6" fill="none" stroke="#4f2da7" stroke-width="1.9"/><rect x="678.8" y="104.5" width="22.5" height="1.3" fill="#7d7d7d"/></g>
<rect x="82" y="354" width="15.5" height="2" fill="#4f2da7"/><rect x="87" y="352.1" width="5.5" height="2.2" rx=".8" fill="#4f2da7"/><path d="M83.5,357 H96 L95.6,369 a.8,.8 0 0 1 -.8,.8 H84.7 a.8,.8 0 0 1 -.8,-.8Z" fill="#7f7f7f"/><rect x="85.6" y="359.4" width="1.1" height="8.2" fill="#f2f2f2"/><rect x="88.1" y="359.4" width="1.1" height="8.2" fill="#f2f2f2"/><rect x="90.6" y="359.4" width="1.1" height="8.2" fill="#f2f2f2"/><rect x="93.1" y="359.4" width="1.1" height="8.2" fill="#f2f2f2"/>
<path d="M52,182.2 L55.4,185.5 L58.8,182.2" fill="none" stroke="#111" stroke-width="1.6"/><path d="M71.2,214.9 L74.7,218.3 L71.2,221.70000000000002" fill="none" stroke="#111" stroke-width="1.6"/><path d="M71.2,250.4 L74.7,253.8 L71.2,257.2" fill="none" stroke="#111" stroke-width="1.6"/><path d="M53.2,360.20000000000005 L56.7,363.6 L53.2,367.0" fill="none" stroke="#111" stroke-width="1.6"/>
<g transform="translate(1044,234.9) rotate(-40)" fill="none" stroke="#4f2da7" stroke-width="1.5" stroke-linecap="round"><path d="M-1.1,-2.7 H-4 a2.7,2.7 0 0 0 0,5.4 H-1.1 M1.1,-2.7 H4 a2.7,2.7 0 0 1 0,5.4 H1.1 M-2.7,0 H2.7"/></g><g transform="translate(1044,269.9) rotate(-40)" fill="none" stroke="#c6c6c6" stroke-width="1.5" stroke-linecap="round"><path d="M-1.1,-2.7 H-4 a2.7,2.7 0 0 0 0,5.4 H-1.1 M1.1,-2.7 H4 a2.7,2.7 0 0 1 0,5.4 H1.1 M-2.7,0 H2.7"/></g><g transform="translate(1044,304.9) rotate(-40)" fill="none" stroke="#4f2da7" stroke-width="1.5" stroke-linecap="round"><path d="M-1.1,-2.7 H-4 a2.7,2.7 0 0 0 0,5.4 H-1.1 M1.1,-2.7 H4 a2.7,2.7 0 0 1 0,5.4 H1.1 M-2.7,0 H2.7"/></g><g transform="translate(1044,339.9) rotate(-40)" fill="none" stroke="#c6c6c6" stroke-width="1.5" stroke-linecap="round"><path d="M-1.1,-2.7 H-4 a2.7,2.7 0 0 0 0,5.4 H-1.1 M1.1,-2.7 H4 a2.7,2.7 0 0 1 0,5.4 H1.1 M-2.7,0 H2.7"/></g>
<circle cx="1109.7" cy="382.2" r="7.4" fill="#fff" stroke="#555" stroke-width="1.8"/><circle cx="1109.7" cy="419.9" r="7.4" fill="#fff" stroke="#4f2da7" stroke-width="1.9"/><circle cx="1109.7" cy="419.9" r="4.2" fill="#4f2da7"/><circle cx="1109.7" cy="531.8" r="7.4" fill="#fff" stroke="#4f2da7" stroke-width="1.9"/><circle cx="1109.7" cy="531.8" r="4.2" fill="#4f2da7"/><circle cx="1109.7" cy="569.8" r="7.4" fill="#fff" stroke="#555" stroke-width="1.8"/><circle cx="1109.7" cy="607.9" r="7.4" fill="#fff" stroke="#555" stroke-width="1.8"/><circle cx="1109.7" cy="646" r="7.4" fill="#fff" stroke="#555" stroke-width="1.8"/><circle cx="1109.7" cy="684" r="7.4" fill="#fff" stroke="#555" stroke-width="1.8"/>
<circle cx="1196" cy="277" r="8.5" fill="#fff" stroke="#4f2da7" stroke-width="1.1"/><text x="1196" y="281.6" text-anchor="middle" font-family="Liberation Sans" font-size="13.5" fill="#4f2da7">?</text><circle cx="1725" cy="605" r="8.5" fill="#fff" stroke="#4f2da7" stroke-width="1.1"/><text x="1725" y="609.6" text-anchor="middle" font-family="Liberation Sans" font-size="13.5" fill="#4f2da7">?</text><circle cx="1725" cy="643.2" r="8.5" fill="#fff" stroke="#4f2da7" stroke-width="1.1"/><text x="1725" y="647.8000000000001" text-anchor="middle" font-family="Liberation Sans" font-size="13.5" fill="#4f2da7">?</text>
<path d="M1041.8,478.5 H1052 L1046.9,483.5Z" fill="#484848"/><path d="M1041.8,524.8 H1052 L1046.9,529.8Z" fill="#484848"/><path d="M1041.8,624.6 H1052 L1046.9,629.6Z" fill="#484848"/><path d="M605,810.9 H615.2 L610.1,815.9Z" fill="#484848"/><path d="M1721,230.7 H1731 L1726.0,235.7Z" fill="#a6a6a6"/><path d="M1721,273.9 H1731 L1726.0,278.9Z" fill="#333"/>
<rect x="1134.6" y="986.7" width="20.6" height="24.6" rx="2.2" fill="#f3f3f3" stroke="#b9b9b9" stroke-width="1.3"/><path d="M1134.6,993.8 V988.9 a2.2,2.2 0 0 1 2.2,-2.2 H1153 a2.2,2.2 0 0 1 2.2,2.2 V993.8Z" fill="#b9b9b9"/><rect x="1136.2" y="988.1" width="17.5" height="4" rx="1.6" fill="#fff"/><rect x="1136.5" y="996.2" width="3.3" height="1.6" fill="#b4b4b4"/><rect x="1141" y="996.2" width="3.3" height="1.6" fill="#b4b4b4"/><rect x="1145.3" y="996.2" width="3.3" height="1.6" fill="#b4b4b4"/><rect x="1149.8" y="996.2" width="3.3" height="1.6" fill="#b4b4b4"/><rect x="1136.5" y="999.2" width="3.3" height="1.6" fill="#b4b4b4"/><rect x="1141" y="999.2" width="3.3" height="1.6" fill="#b4b4b4"/><rect x="1145.3" y="999.2" width="3.3" height="1.6" fill="#b4b4b4"/><rect x="1149.8" y="999.2" width="3.3" height="1.6" fill="#b4b4b4"/><rect x="1136.5" y="1002.2" width="3.3" height="1.6" fill="#b4b4b4"/><rect x="1141" y="1002.2" width="3.3" height="1.6" fill="#b4b4b4"/><rect x="1145.3" y="1002.2" width="3.3" height="1.6" fill="#b4b4b4"/><rect x="1149.8" y="1002.2" width="3.3" height="1.6" fill="#b4b4b4"/><rect x="1136.5" y="1005.2" width="3.3" height="1.6" fill="#b4b4b4"/><rect x="1141" y="1005.2" width="3.3" height="1.6" fill="#b4b4b4"/><rect x="1145.3" y="1005.2" width="3.3" height="1.6" fill="#b4b4b4"/><rect x="1149.8" y="1005.2" width="3.3" height="1.6" fill="#b4b4b4"/><rect x="1145.3" y="1008.2" width="7.8" height="1.6" fill="#b4b4b4"/>
<g transform="translate(1507.7,982)"><path d="M0,8.3 H29.6 M11,1.4 V30 M11.6,1.2 L2.5,8.3 M11.6,1.2 L28.5,8.3 M3.5,8.3 V16" fill="none" stroke="#fff" stroke-width="1.5"/><circle cx="4.5" cy="17.8" r="2.3" fill="#fff"/><path d="M5.4,8.3 V16" stroke="#fff" stroke-width="1"/><path d="M8.4,8.3 V30" stroke="#fff" stroke-width="1.3"/><path d="M8.4,10 L11,13 L8.4,16 L11,19 L8.4,22 L11,25 L8.4,28" fill="none" stroke="#fff" stroke-width=".8"/><rect x="12.4" y="12" width="14" height="18.2" fill="#fff"/><rect x="14.2" y="13.8" width="2.4" height="2.6" fill="#4f2da7"/><rect x="14.2" y="17.6" width="2.4" height="2.6" fill="#4f2da7"/><rect x="14.2" y="21.4" width="2.4" height="2.6" fill="#4f2da7"/><rect x="18" y="13.8" width="2.4" height="2.6" fill="#4f2da7"/><rect x="18" y="17.6" width="2.4" height="2.6" fill="#4f2da7"/><rect x="18" y="21.4" width="2.4" height="2.6" fill="#4f2da7"/><rect x="21.8" y="13.8" width="2.4" height="2.6" fill="#4f2da7"/><rect x="21.8" y="17.6" width="2.4" height="2.6" fill="#4f2da7"/><rect x="21.8" y="21.4" width="2.4" height="2.6" fill="#4f2da7"/><rect x="17.6" y="25.8" width="3.6" height="4.4" fill="#4f2da7"/><path d="M6.6,29.4 H27.2 V31 H4.6Z" fill="#fff"/><g transform="translate(22.6,21.2) rotate(45)"><rect x="-2.9" y="-11.6" width="5.8" height="17" fill="#4f2da7"/><path d="M-1.7,-10.6 H1.7 V3.2 L0,6.8 L-1.7,3.2Z" fill="#fff"/><rect x="-1.7" y="-7.8" width="3.4" height="1" fill="#4f2da7"/></g></g>
</svg>
<div id="t">
<span style="left:74.34px;top:15.15px;font-size:14px;color:#222;transform:scaleX(1.051);">Мои документы</span>
<span style="left:88.65px;top:43.15px;font-size:14px;color:#1a1a1a;font-weight:700;transform:scaleX(0.944);">Главная</span>
<span style="left:188.88px;top:43.15px;font-size:14px;color:#484848;transform:scaleX(1.021);">Вставка</span>
<span style="left:289.90px;top:43.15px;font-size:14px;color:#484848;transform:scaleX(1.007);">Объёмы</span>
<span style="left:391.39px;top:43.15px;font-size:14px;color:#484848;transform:scaleX(1.009);">Выполнение</span>
<span style="left:521.43px;top:43.15px;font-size:14px;color:#484848;transform:scaleX(0.977);">Вид</span>
<span style="left:595.41px;top:43.15px;font-size:14px;color:#484848;transform:scaleX(0.985);">Операции</span>
<span style="left:706.91px;top:43.15px;font-size:14px;color:#484848;transform:scaleX(0.986);">Отчет</span>
<span style="left:10.05px;top:117.19px;font-size:11px;color:#1a1a1a;-webkit-text-stroke:0.28px #1a1a1a;transform:scaleX(1.054);">Копировать</span>
<span style="left:87.55px;top:117.19px;font-size:11px;color:#9e9e9e;-webkit-text-stroke:0.28px #9e9e9e;transform:scaleX(1.060);">Вставить</span>
<span style="left:157.04px;top:117.19px;font-size:11px;color:#1a1a1a;-webkit-text-stroke:0.28px #1a1a1a;transform:scaleX(1.072);">Вырезать</span>
<span style="left:261.48px;top:76.19px;font-size:11px;color:#1a1a1a;-webkit-text-stroke:0.28px #1a1a1a;transform:scaleX(1.034);">Отменить</span>
<span style="left:261.15px;top:99.19px;font-size:11px;color:#9e9e9e;-webkit-text-stroke:0.28px #9e9e9e;transform:scaleX(1.058);">Повторить</span>
<span style="left:262.55px;top:122.19px;font-size:11px;color:#1a1a1a;-webkit-text-stroke:0.28px #1a1a1a;transform:scaleX(1.015);">Удалить</span>
<span style="left:379.05px;top:117.19px;font-size:11px;color:#1a1a1a;-webkit-text-stroke:0.28px #1a1a1a;transform:scaleX(1.059);">Базы</span>
<span style="left:446.98px;top:117.19px;font-size:11px;color:#1a1a1a;-webkit-text-stroke:0.28px #1a1a1a;transform:scaleX(1.046);">Сметы</span>
<span style="left:507.97px;top:117.19px;font-size:11px;color:#1a1a1a;-webkit-text-stroke:0.28px #1a1a1a;transform:scaleX(1.058);">Открытые</span>
<span style="left:601.69px;top:117.19px;font-size:11px;color:#1a1a1a;-webkit-text-stroke:0.28px #1a1a1a;transform:scaleX(1.019);">Папка</span>
<span style="left:673.26px;top:117.19px;font-size:11px;color:#1a1a1a;-webkit-text-stroke:0.28px #1a1a1a;transform:scaleX(0.988);">Смета</span>
<span style="left:755.65px;top:117.19px;font-size:11px;color:#1a1a1a;-webkit-text-stroke:0.28px #1a1a1a;transform:scaleX(1.058);">Поиск</span>
<span style="left:817.44px;top:117.19px;font-size:11px;color:#9e9e9e;-webkit-text-stroke:0.28px #9e9e9e;transform:scaleX(1.037);">Заменить</span>
<span style="left:894.80px;top:117.19px;font-size:11px;color:#1a1a1a;-webkit-text-stroke:0.28px #1a1a1a;transform:scaleX(1.060);">Импорт сметы</span>
<span style="left:980.72px;top:117.19px;font-size:11px;color:#1a1a1a;-webkit-text-stroke:0.28px #1a1a1a;transform:scaleX(1.051);">Экспорт сметы</span>
<span style="left:1089.91px;top:117.19px;font-size:11px;color:#1a1a1a;-webkit-text-stroke:0.28px #1a1a1a;transform:scaleX(1.045);">Пакетная выгрузка</span>
<span style="left:1103.14px;top:128.19px;font-size:11px;color:#1a1a1a;-webkit-text-stroke:0.28px #1a1a1a;transform:scaleX(1.051);">документации</span>
<span style="left:1229.49px;top:117.19px;font-size:11px;color:#1a1a1a;-webkit-text-stroke:0.28px #1a1a1a;transform:scaleX(1.021);">Справка о</span>
<span style="left:1226.76px;top:128.19px;font-size:11px;color:#1a1a1a;-webkit-text-stroke:0.28px #1a1a1a;transform:scaleX(1.054);">программе</span>
<span style="left:1305.56px;top:117.19px;font-size:11px;color:#9e9e9e;-webkit-text-stroke:0.28px #9e9e9e;transform:scaleX(1.045);">Горячие</span>
<span style="left:1304.01px;top:128.19px;font-size:11px;color:#9e9e9e;-webkit-text-stroke:0.28px #9e9e9e;transform:scaleX(1.059);">клавиши</span>
<span style="left:1382.23px;top:118.19px;font-size:11px;color:#9e9e9e;-webkit-text-stroke:0.28px #9e9e9e;transform:scaleX(1.036);">Сменить</span>
<span style="left:1393.11px;top:129.19px;font-size:11px;color:#9e9e9e;-webkit-text-stroke:0.28px #9e9e9e;transform:scaleX(1.063);">базу</span>
<span style="left:75.11px;top:142.99px;font-size:11px;color:#787878;transform:scaleX(0.987);">Буфер обмена</span>
<span style="left:245.06px;top:142.99px;font-size:11px;color:#787878;transform:scaleX(1.043);">Редактирование</span>
<span style="left:423.05px;top:142.99px;font-size:11px;color:#787878;transform:scaleX(1.050);">Мои документы</span>
<span style="left:632.98px;top:142.99px;font-size:11px;color:#787878;transform:scaleX(1.040);">Создать</span>
<span style="left:792.14px;top:142.99px;font-size:11px;color:#787878;transform:scaleX(1.075);">Поиск</span>
<span style="left:1270.67px;top:142.99px;font-size:11px;color:#787878;transform:scaleX(1.042);">Помощь</span>
<span style="left:990.82px;top:150.89px;font-size:11px;color:#111;-webkit-text-stroke:0.15px #111;transform:scaleX(0.965);">в формат XML GGE</span>
<span style="left:103.80px;top:176.69px;font-size:11px;color:#111;-webkit-text-stroke:0.15px #111;transform:scaleX(1.055);">Мои сметы</span>
<span style="left:122.49px;top:211.69px;font-size:11px;color:#111;-webkit-text-stroke:0.15px #111;transform:scaleX(1.030);">Сводный сметный расчет</span>
<span style="left:122.08px;top:248.29px;font-size:11px;color:#111;-webkit-text-stroke:0.15px #111;transform:scaleX(1.019);">Новая объектная смета</span>
<span style="left:122.08px;top:284.29px;font-size:11px;color:#111;-webkit-text-stroke:0.15px #111;transform:scaleX(1.019);">Новая объектная смета</span>
<span style="left:122.17px;top:319.99px;font-size:11px;color:#111;-webkit-text-stroke:0.15px #111;transform:scaleX(1.036);">Подготовительные работы</span>
<span style="left:104.31px;top:357.39px;font-size:11px;color:#111;-webkit-text-stroke:0.15px #111;transform:scaleX(1.041);">Корзина</span>
<span style="left:407.53px;top:169.15px;font-size:14px;color:#1a1a1a;font-weight:700;transform:scaleX(0.936);">Основные</span>
<span style="left:524.42px;top:169.15px;font-size:14px;color:#484848;transform:scaleX(0.968);">Оформление</span>
<span style="left:658.60px;top:169.15px;font-size:14px;color:#484848;transform:scaleX(1.014);">Дополнительные настройки</span>
<span style="left:411.63px;top:226.15px;font-size:14px;color:#111;font-weight:700;transform:scaleX(0.964);">Наименование стройки</span>
<span style="left:412.21px;top:261.15px;font-size:14px;color:#111;font-weight:700;transform:scaleX(0.963);">Адрес стройки</span>
<span style="left:411.64px;top:296.15px;font-size:14px;color:#111;font-weight:700;transform:scaleX(0.951);">Наименование ОСР</span>
<span style="left:412.22px;top:331.15px;font-size:14px;color:#111;font-weight:700;transform:scaleX(0.938);">Адрес ОСР</span>
<span style="left:411.64px;top:366.15px;font-size:14px;color:#111;font-weight:700;transform:scaleX(0.955);">Номер/шифр ОСР</span>
<span style="left:412.01px;top:401.15px;font-size:14px;color:#111;font-weight:700;transform:scaleX(0.972);">Стадия</span>
<span style="left:632.40px;top:226.15px;font-size:14px;color:#222;transform:scaleX(1.042);">ЖК Майский</span>
<span style="left:631.52px;top:261.15px;font-size:14px;color:#222;transform:scaleX(1.085);">г. Москва</span>
<span style="left:631.38px;top:296.15px;font-size:14px;color:#222;transform:scaleX(1.021);">Новая объектная смета</span>
<span style="left:631.52px;top:331.15px;font-size:14px;color:#222;transform:scaleX(1.085);">г. Москва</span>
<span style="left:631.92px;top:366.15px;font-size:14px;color:#222;transform:scaleX(0.972);">ОСР 1212121</span>
<span style="left:631.29px;top:401.15px;font-size:14px;color:#222;transform:scaleX(1.102);">РД</span>
<span style="left:412.02px;top:474.15px;font-size:14px;color:#111;font-weight:700;transform:scaleX(0.963);">Субъект Российской</span>
<span style="left:412.11px;top:490.15px;font-size:14px;color:#111;font-weight:700;transform:scaleX(0.964);">Федерации</span>
<span style="left:631.35px;top:474.15px;font-size:14px;color:#222;transform:scaleX(1.048);">Московская область</span>
<span style="left:411.63px;top:519.95px;font-size:14px;color:#111;font-weight:700;transform:scaleX(0.964);">Ценовая зона</span>
<span style="left:631.35px;top:519.95px;font-size:14px;color:#222;transform:scaleX(1.048);">Московская область</span>
<span style="left:411.93px;top:588.96px;font-size:16px;color:#111;font-weight:700;transform:scaleX(0.949);">Сплит-форма</span>
<span style="left:411.61px;top:620.15px;font-size:14px;color:#111;font-weight:700;transform:scaleX(0.984);">Квартал</span>
<span style="left:631.77px;top:620.15px;font-size:14px;color:#222;transform:scaleX(1.049);">2 квартал 2025г.</span>
<span style="left:412.03px;top:650.85px;font-size:14px;color:#111;font-weight:700;transform:scaleX(0.946);">Сплит-форма</span>
<span style="left:631.36px;top:650.85px;font-size:14px;color:#222;transform:scaleX(1.040);">Московская область на 2 квартал 2025г.</span>
<span style="left:411.50px;top:724.26px;font-size:16px;color:#111;font-weight:700;transform:scaleX(0.960);">Температурная</span>
<span style="left:535.11px;top:724.26px;font-size:16px;color:#111;font-weight:700;transform:scaleX(0.969);">зона</span>
<span style="left:492.54px;top:770.84px;font-size:12px;color:#222;font-weight:700;transform:scaleX(0.951);">Вид работ</span>
<span style="left:710.82px;top:770.84px;font-size:12px;color:#222;font-weight:700;transform:scaleX(0.973);">Регион</span>
<span style="left:846.20px;top:763.84px;font-size:12px;color:#222;font-weight:700;transform:scaleX(0.972);">Температурная</span>
<span style="left:876.40px;top:777.84px;font-size:12px;color:#222;font-weight:700;transform:scaleX(0.987);">зона</span>
<span style="left:955.64px;top:763.84px;font-size:12px;color:#222;font-weight:700;transform:scaleX(0.950);">Коэффициенты</span>
<span style="left:959.61px;top:777.84px;font-size:12px;color:#222;font-weight:700;transform:scaleX(0.990);">к нормативам</span>
<span style="left:429.60px;top:807.34px;font-size:12px;color:#222;transform:scaleX(1.008);">325/пр Приложение 4, п. 54</span>
<span style="left:671.26px;top:807.34px;font-size:12px;color:#222;transform:scaleX(1.048);">Московская область</span>
<span style="left:884.14px;top:807.34px;font-size:12px;color:#222;transform:scaleX(1.144);">III</span>
<span style="left:997.13px;top:807.34px;font-size:12px;color:#222;transform:scaleX(0.962);">1</span>
<span style="left:1100.63px;top:226.15px;font-size:14px;color:#9a9a9a;font-weight:700;transform:scaleX(0.967);">Нормативная база</span>
<span style="left:1321.19px;top:226.15px;font-size:14px;color:#9a9a9a;transform:scaleX(1.008);">Федеральная сметная нормативная база ФСНБ-2022</span>
<span style="left:1101.40px;top:269.15px;font-size:14px;color:#111;font-weight:700;transform:scaleX(0.951);">Дополнение</span>
<span style="left:1321.90px;top:269.15px;font-size:14px;color:#111;transform:scaleX(1.010);">Дополнение 14 от 19.05.2025</span>
<span style="left:1100.51px;top:338.96px;font-size:16px;color:#9a9a9a;font-weight:700;transform:scaleX(0.986);">Методика расчета</span>
<span style="left:1125.30px;top:376.34px;font-size:12px;color:#9a9a9a;transform:scaleX(1.022);">421/пр в ред. от 30.01.2024 N 55/пр</span>
<span style="left:1125.30px;top:413.84px;font-size:12px;color:#9a9a9a;transform:scaleX(1.022);">421/пр в ред. от 23.01.2025 N 30/пр</span>
<span style="left:1100.55px;top:488.96px;font-size:16px;color:#111;font-weight:700;transform:scaleX(0.952);">Вид работ</span>
<span style="left:1124.88px;top:525.84px;font-size:12px;color:#222;transform:scaleX(1.030);">Строительство</span>
<span style="left:1124.55px;top:563.84px;font-size:12px;color:#222;transform:scaleX(1.060);">Реконструкция</span>
<span style="left:1124.57px;top:601.84px;font-size:12px;color:#222;transform:scaleX(1.039);">Капитальный ремонт производственных зданий</span>
<span style="left:1124.57px;top:639.84px;font-size:12px;color:#222;transform:scaleX(1.033);">Капитальный ремонт жилых и общественных зданий</span>
<span style="left:1124.88px;top:677.84px;font-size:12px;color:#222;transform:scaleX(1.027);">Снос объектов капитального строительства</span>
<span style="left:1100.93px;top:752.96px;font-size:16px;color:#111;font-weight:700;transform:scaleX(0.954);">Справочник поправок</span>
<span style="left:1101.02px;top:779.85px;font-size:14px;color:#111;font-weight:700;transform:scaleX(0.952);">Сборник</span>
<span style="left:1320.69px;top:779.85px;font-size:14px;color:#222;transform:scaleX(1.007);">Поправки для ФСНБ-2022 от 23.05.2025 г И14 (55пр)</span>
<span style="left:1321.08px;top:795.85px;font-size:14px;color:#222;transform:scaleX(1.027);">Строительство</span>
<span style="left:391.64px;top:977.15px;font-size:14px;color:#111;font-weight:700;transform:scaleX(0.960);">Всего</span>
<span style="left:450.20px;top:977.15px;font-size:14px;color:#222;">0,00 тыс. р.</span>
<span style="left:1169.28px;top:989.07px;font-size:20px;color:#c2c2c2;transform:scaleX(1.077);">Применить параметры к ЛСР</span>
<span style="left:1546.59px;top:989.07px;font-size:20px;color:#ffffff;transform:scaleX(1.068);">Редактировать ОСР</span>
</div>
</body></html>
